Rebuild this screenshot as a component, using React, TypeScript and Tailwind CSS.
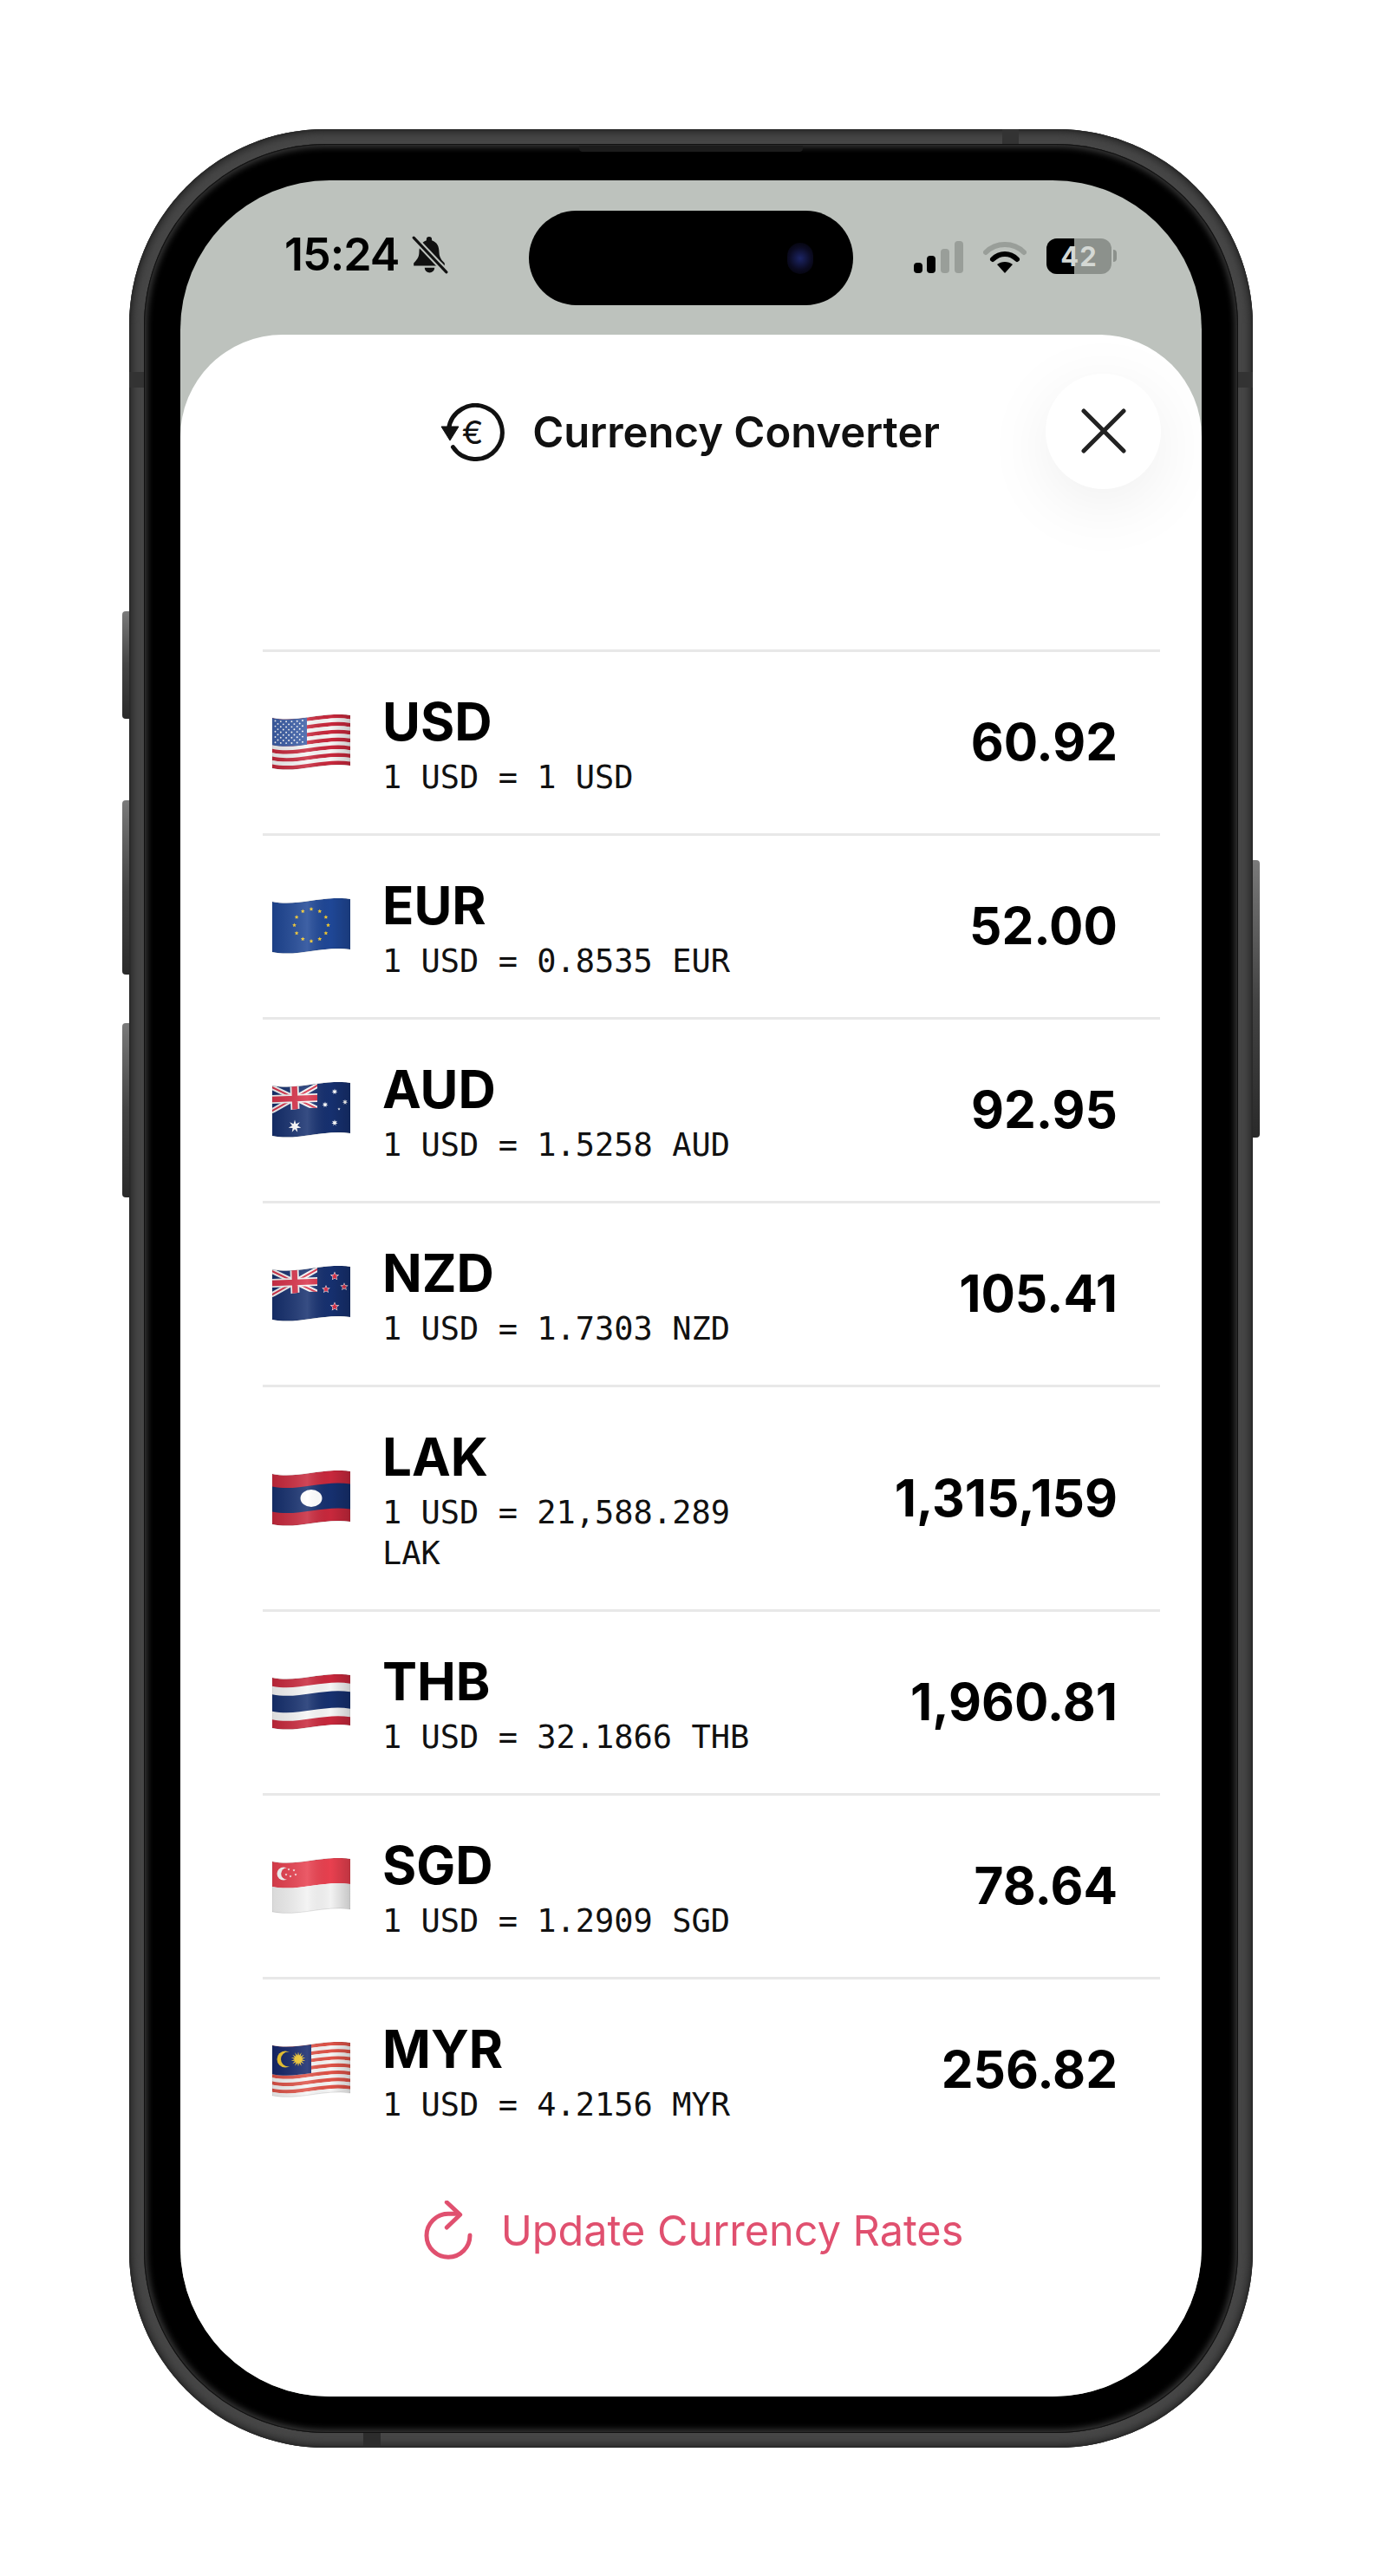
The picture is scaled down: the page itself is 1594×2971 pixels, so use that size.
import React from "react";

const W = (x: number) => {
  const t = x / 90;
  return 3 * (1 - t) ** 2 * t * 6 + 3 * (1 - t) * t * t * -8 + t ** 3 * -3;
};
const TOP = 4;
const H = 58;
const fy = (f: number) => TOP + H * f;
const band = (f1: number, f2: number) => {
  const a = fy(f1);
  const b = fy(f2);
  return `M0 ${a}C30 ${a + 6} 60 ${a - 8} 90 ${a - 3}V${b - 3}C60 ${b - 8} 30 ${b + 6} 0 ${b}Z`;
};
const star = (cx: number, cy: number, r: number, n = 5, inner = 0.45) => {
  const pts: string[] = [];
  for (let i = 0; i < n * 2; i++) {
    const rad = i % 2 === 0 ? r : r * inner;
    const a = -Math.PI / 2 + (i * Math.PI) / n;
    pts.push(`${(cx + rad * Math.cos(a)).toFixed(2)},${(cy + rad * Math.sin(a)).toFixed(2)}`);
  }
  return pts.join(" ");
};

const RED = "#c8283c";
const WHITE = "#f5f5f5";
const NAVY = "#16306f";

function Stripes({ n, a, b }: { n: number; a: string; b: string }) {
  return (
    <>
      {Array.from({ length: n }).map((_, i) => (
        <path key={i} d={band(i / n, (i + 1) / n)} fill={i % 2 === 0 ? a : b} />
      ))}
    </>
  );
}

function Jack({ id }: { id: string }) {
  return (
    <g clipPath={`url(#${id}-c)`}>
      <clipPath id={`${id}-c`}>
        <path d="M0 0H52V30C35 29 18 33 0 36Z" />
      </clipPath>
      <g transform="rotate(-2 26 18)">
        <path d="M-2 4L54 33M54 4L-2 33" stroke={WHITE} strokeWidth="6" />
        <path d="M-2 4L54 33M54 4L-2 33" stroke="#d8324a" strokeWidth="2" />
        <path d="M26 0V40M-2 19H54" stroke={WHITE} strokeWidth="10" />
        <path d="M26 0V40M-2 19H54" stroke="#d8324a" strokeWidth="6.5" />
      </g>
    </g>
  );
}

function FlagBody({ code, id }: { code: string; id: string }) {
  switch (code) {
    case "USD":
      return (
        <>
          <Stripes n={13} a={RED} b={WHITE} />
          <g clipPath={`url(#${id}-k)`}>
            <clipPath id={`${id}-k`}>
              <rect x="0" y="0" width="40" height="64" />
            </clipPath>
            <path d={band(0, 7 / 13)} fill="#3c5fa8" />
          </g>
          {Array.from({ length: 9 }).flatMap((_, r) =>
            Array.from({ length: r % 2 === 0 ? 6 : 5 }).map((__, c) => {
              const x = (r % 2 === 0 ? 3.5 : 6.5) + c * 6.3;
              return <circle key={`${r}-${c}`} cx={x} cy={TOP + 2.8 + r * 3.1 + W(x)} r="0.95" fill="#fff" />;
            })
          )}
        </>
      );
    case "EUR":
      return (
        <>
          <path d={band(0, 1)} fill="#1f4796" />
          {Array.from({ length: 12 }).map((_, i) => {
            const a = (i * Math.PI) / 6;
            return <polygon key={i} points={star(45 + 19.5 * Math.sin(a), 31 - 18.5 * Math.cos(a), 2.6)} fill="#f3c92f" />;
          })}
        </>
      );
    case "AUD":
      return (
        <>
          <path d={band(0, 1)} fill={NAVY} />
          <Jack id={id} />
          <polygon points={star(26, 51, 7.5, 7, 0.42)} fill="#fff" />
          <polygon points={star(72, 11, 3.6, 7, 0.42)} fill="#fff" />
          <polygon points={star(61, 26, 3.6, 7, 0.42)} fill="#fff" />
          <polygon points={star(84, 23, 3.3, 7, 0.42)} fill="#fff" />
          <polygon points={star(77, 31, 1.8, 5, 0.42)} fill="#fff" />
          <polygon points={star(72, 47, 3.8, 7, 0.42)} fill="#fff" />
        </>
      );
    case "NZD":
      return (
        <>
          <path d={band(0, 1)} fill={NAVY} />
          <Jack id={id} />
          {[
            [72, 12, 4.2],
            [62, 27, 3.8],
            [83, 24, 3.6],
            [72, 47, 4.4],
          ].map(([x, y, r], i) => (
            <g key={i}>
              <polygon points={star(x, y, r + 1.2)} fill="#fff" />
              <polygon points={star(x, y, r)} fill="#d8324a" />
            </g>
          ))}
        </>
      );
    case "LAK":
      return (
        <>
          <path d={band(0, 1)} fill={RED} />
          <path d={band(0.25, 0.75)} fill={NAVY} />
          <ellipse cx="45" cy="32" rx="12.5" ry="10" fill="#fff" />
        </>
      );
    case "THB":
      return (
        <>
          <path d={band(0, 1)} fill={RED} />
          <path d={band(1 / 6, 5 / 6)} fill={WHITE} />
          <path d={band(2 / 6, 4 / 6)} fill={NAVY} />
        </>
      );
    case "SGD":
      return (
        <>
          <path d={band(0, 0.5)} fill="#e8404f" />
          <path d={band(0.5, 1)} fill="#f2f2f2" />
          <circle cx="13" cy="18" r="7.5" fill="#fff" />
          <circle cx="17" cy="18" r="6.8" fill="#e8404f" />
          {[
            [19, 13],
            [25, 14],
            [27, 19],
            [21, 21],
            [16, 19],
          ].map(([x, y], i) => (
            <polygon key={i} points={star(x, y, 1.6)} fill="#fff" />
          ))}
        </>
      );
    default:
      return (
        <>
          <Stripes n={14} a="#df5348" b={WHITE} />
          <g clipPath={`url(#${id}-k)`}>
            <clipPath id={`${id}-k`}>
              <rect x="0" y="0" width="45" height="64" />
            </clipPath>
            <path d={band(0, 8 / 14)} fill="#15276b" />
          </g>
          <circle cx="15" cy="20" r="9.5" fill="#f3c92f" />
          <circle cx="18.5" cy="20" r="8.5" fill="#15276b" />
          <polygon points={star(30, 20, 8.5, 14, 0.5)} fill="#f3c92f" />
        </>
      );
  }
}

function Flag({ code }: { code: string }) {
  const id = `f-${code}`;
  return (
    <svg width="90" height="64" viewBox="0 0 90 64" className="shrink-0">
      <defs>
        <clipPath id={`${id}-all`}>
          <path d={band(0, 1)} />
        </clipPath>
        <linearGradient id={`${id}-sh`} x1="0" x2="1" y1="0" y2="0">
          <stop offset="0" stopColor="#000" stopOpacity="0.1" />
          <stop offset="0.45" stopColor="#fff" stopOpacity="0.14" />
          <stop offset="0.75" stopColor="#000" stopOpacity="0" />
          <stop offset="1" stopColor="#000" stopOpacity="0.18" />
        </linearGradient>
      </defs>
      <g clipPath={`url(#${id}-all)`}>
        <FlagBody code={code} id={id} />
        <path d={band(0, 1)} fill={`url(#${id}-sh)`} />
      </g>
      <path d={band(0, 1)} fill="none" stroke="#000" strokeOpacity="0.14" strokeWidth="0.8" />
    </svg>
  );
}

const rows = [
  { code: "USD", rate: "1 USD = 1 USD", value: "60.92" },
  { code: "EUR", rate: "1 USD = 0.8535 EUR", value: "52.00" },
  { code: "AUD", rate: "1 USD = 1.5258 AUD", value: "92.95" },
  { code: "NZD", rate: "1 USD = 1.7303 NZD", value: "105.41" },
  { code: "LAK", rate: "1 USD = 21,588.289 LAK", value: "1,315,159" },
  { code: "THB", rate: "1 USD = 32.1866 THB", value: "1,960.81" },
  { code: "SGD", rate: "1 USD = 1.2909 SGD", value: "78.64" },
  { code: "MYR", rate: "1 USD = 4.2156 MYR", value: "256.82" },
];

function SideButton({ cls }: { cls: string }) {
  return (
    <div
      className={`absolute w-[10px] bg-gradient-to-b from-[#7a7a7a] via-[#444444] to-[#2a2a2a] ${cls}`}
    />
  );
}

export default function App() {
  return (
    <div className="w-[1594px] h-[2971px] bg-white flex items-center justify-center font-['Inter',sans-serif] text-black">
      <div className="relative w-[1296px] h-[2674px]">
        <SideButton cls="left-[-8px] top-[556px] h-[124px] rounded-l-[4px]" />
        <SideButton cls="left-[-8px] top-[774px] h-[201px] rounded-l-[4px]" />
        <SideButton cls="left-[-8px] top-[1031px] h-[201px] rounded-l-[4px]" />
        <SideButton cls="right-[-8px] top-[843px] h-[320px] rounded-r-[4px]" />
        <div className="relative w-full h-full rounded-[226px] bg-[#464646] p-[17px] shadow-[inset_0_0_2px_2px_#2a2a2a,inset_0_0_6px_6px_#333333]">
          <div className="absolute left-[519px] top-[19px] w-[258px] h-[7px] rounded-b-[4px] bg-[#1c1c1c]" />
          <div className="absolute left-[1007px] top-0 w-[19px] h-[17px] bg-[#333333]" />
          <div className="absolute left-[270px] bottom-0 w-[20px] h-[17px] bg-[#2c2c2c]" />
          <div className="absolute left-0 top-[280px] w-[17px] h-[18px] bg-[#333333]" />
          <div className="absolute right-0 top-[280px] w-[17px] h-[18px] bg-[#333333]" />
          <div className="w-full h-full rounded-[210px] bg-black p-[42px] shadow-[inset_0_0_0_1px_#111111,inset_0_0_7px_4px_#363636]">
            <div className="w-full h-full rounded-[172px] overflow-hidden bg-[#bdc2bd] flex flex-col">
              <div className="relative h-[178px] shrink-0">
                <div className="absolute left-[120px] top-[60px] flex items-center gap-[13px]">
                  <span className="text-[52px] leading-[52px] font-semibold tracking-[-1px]">15:24</span>
                  <svg width="43" height="44" viewBox="0 0 41 42">
                    <path d="M20 1a3 3 0 0 1 3 3v1c6 2 8 7 8 13 0 6 3 9 6 12v3H3v-3c3-3 6-6 6-12 0-6 2-11 8-13V4a3 3 0 0 1 3-3z" fill="#111" />
                    <path d="M15 35a5.5 5.5 0 0 0 11 0z" fill="#111" />
                    <path d="M3 2L39 40" stroke="#bdc2bd" strokeWidth="7" />
                    <path d="M3 2L39 40" stroke="#111" strokeWidth="3" strokeLinecap="round" />
                  </svg>
                </div>
                <div className="absolute left-[402px] top-[35px] w-[374px] h-[109px] rounded-[55px] bg-black">
                  <div className="absolute left-[298px] top-[37px] w-[30px] h-[36px] rounded-full bg-[radial-gradient(circle,#1c2566_0%,#0b0b22_55%,#000000_100%)]" />
                </div>
                <div className="absolute left-[846px] top-[70px]">
                  <svg width="57" height="37" viewBox="0 0 57 37">
                    <rect x="0" y="25" width="10" height="12" rx="4" fill="#000" />
                    <rect x="15" y="17" width="10" height="20" rx="4" fill="#000" />
                    <rect x="31" y="9" width="10" height="28" rx="4" fill="#999e99" />
                    <rect x="47" y="0" width="10" height="37" rx="4" fill="#999e99" />
                  </svg>
                </div>
                <div className="absolute left-[926px] top-[70px]">
                  <svg width="50" height="37" viewBox="0 0 50 37">
                    <path d="M3 13C15 1 35 1 47 13" stroke="#999e99" strokeWidth="6" fill="none" strokeLinecap="round" />
                    <path d="M11 21C19 13 31 13 39 21" stroke="#000" strokeWidth="6" fill="none" strokeLinecap="round" />
                    <path d="M25 37L16 27C21 23 29 23 34 27Z" fill="#000" />
                  </svg>
                </div>
                <div className="absolute left-[999px] top-[67px] flex items-center">
                  <div className="relative w-[75px] h-[41px] rounded-[12px] overflow-hidden bg-[#8c918c] flex items-center justify-center">
                    <div className="absolute left-0 top-0 bottom-0 w-[32px] bg-black" />
                    <span className="relative text-[31px] leading-[41px] font-bold tracking-[1px] text-[#d4d8d4]">42</span>
                  </div>
                  <div className="ml-[2px] w-[4px] h-[14px] rounded-r-full bg-[#8c918c]" />
                </div>
              </div>

              <div className="relative flex-1 bg-white rounded-t-[118px] pl-[95px] pr-[48px]">
                <div className="h-[226px] flex items-center justify-center gap-[32px] pr-[2px] -ml-[95px] -mr-[48px]">
                  <svg width="74" height="67" viewBox="0 0 74 67" className="shrink-0">
                    <path d="M9.5 30A31 31 0 1 1 14.5 50.7" fill="none" stroke="#111" strokeWidth="5" strokeLinecap="round" />
                    <path d="M1 27H21L11 43Z" fill="#111" strokeLinejoin="round" stroke="#111" strokeWidth="1" />
                    <text x="37" y="46.5" textAnchor="middle" fontSize="37" fontWeight="400" fill="#111" fontFamily="Inter, sans-serif">€</text>
                  </svg>
                  <span className="text-[49px] leading-[60px] font-semibold text-[#111]">Currency Converter</span>
                </div>
                <div className="absolute left-[998px] top-[45px] w-[133px] h-[133px] rounded-full bg-white shadow-[0_18px_80px_rgba(0,0,0,0.07)] flex items-center justify-center">
                  <svg width="52" height="52" viewBox="0 0 52 52">
                    <path d="M3 3L49 49M49 3L3 49" stroke="#222" strokeWidth="5" strokeLinecap="round" />
                  </svg>
                </div>
                <div className="mt-[137px] flex flex-col">
                  {rows.map((r) => (
                    <div
                      key={r.code}
                      className="flex items-center pl-[11px] pr-[49px] pt-[41px] pb-[41px] border-t-[3px] border-[#e8e8e8]"
                    >
                      <Flag code={r.code} />
                      <div className="ml-[37px] w-[440px]">
                        <div className="text-[60px] leading-[78px] font-bold mb-[2px]">{r.code}</div>
                        <div className="font-['DejaVu_Sans_Mono',monospace] text-[37px] leading-[47px] text-[#111]">{r.rate}</div>
                      </div>
                      <div className="ml-auto text-[58.5px] leading-[80px] font-bold">{r.value}</div>
                    </div>
                  ))}
                </div>
                <div className="mt-[46px] flex items-center justify-center gap-[33px] pl-[6px] -ml-[95px] -mr-[48px]">
                  <svg width="56" height="69" viewBox="0 0 56 69" className="shrink-0">
                    <path d="M53 40A25 25 0 1 1 28 15.3H40" fill="none" stroke="#e0506f" strokeWidth="5" strokeLinecap="round" />
                    <path d="M26.3 2L41.7 16.3L26.3 31" fill="none" stroke="#e0506f" strokeWidth="5" strokeLinecap="round" strokeLinejoin="round" />
                  </svg>
                  <span className="text-[48.6px] leading-[70px] font-normal text-[#e0506f]">Update Currency Rates</span>
                </div>
              </div>
            </div>
          </div>
        </div>
      </div>
    </div>
  );
}
